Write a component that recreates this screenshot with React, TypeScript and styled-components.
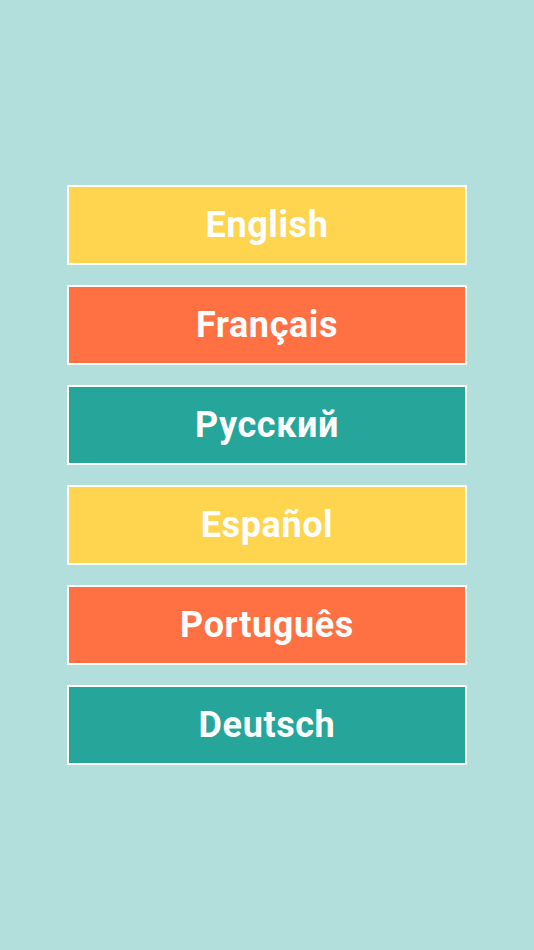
import styled, { createGlobalStyle } from 'styled-components';

const GlobalStyle = createGlobalStyle`
  html, body {
    margin: 0;
    padding: 0;
    background-color: #b2dfdb;
  }
`;

const Screen = styled.div`
  display: flex;
  flex-direction: column;
  align-items: center;
  justify-content: center;
  gap: 20px;

  width: 534px;
  height: 950px;

  background-color: #b2dfdb;
`;

const LanguageButton = styled.button<{ $color: string }>`
  display: flex;
  align-items: center;
  justify-content: center;

  width: 400px;
  height: 80px;
  box-sizing: border-box;
  padding: 0 0 1px;

  background-color: ${(p) => p.$color};
  border: 2px solid #ffffff;

  color: #ffffff;
  font-family: Roboto, 'Noto Sans', sans-serif;
  font-weight: 700;
  font-size: 36px;
  letter-spacing: 0.6px;

  cursor: pointer;
`;

const YELLOW = '#ffd54f';
const ORANGE = '#ff7043';
const TEAL = '#26a69a';

const languages = [
  { label: 'English', color: YELLOW },
  { label: 'Français', color: ORANGE },
  { label: 'Русский', color: TEAL },
  { label: 'Español', color: YELLOW },
  { label: 'Português', color: ORANGE },
  { label: 'Deutsch', color: TEAL },
];

export default function App() {
  return (
    <>
      <GlobalStyle />
      <Screen>
        {languages.map((lang) => (
          <LanguageButton key={lang.label} $color={lang.color}>
            {lang.label}
          </LanguageButton>
        ))}
      </Screen>
    </>
  );
}
